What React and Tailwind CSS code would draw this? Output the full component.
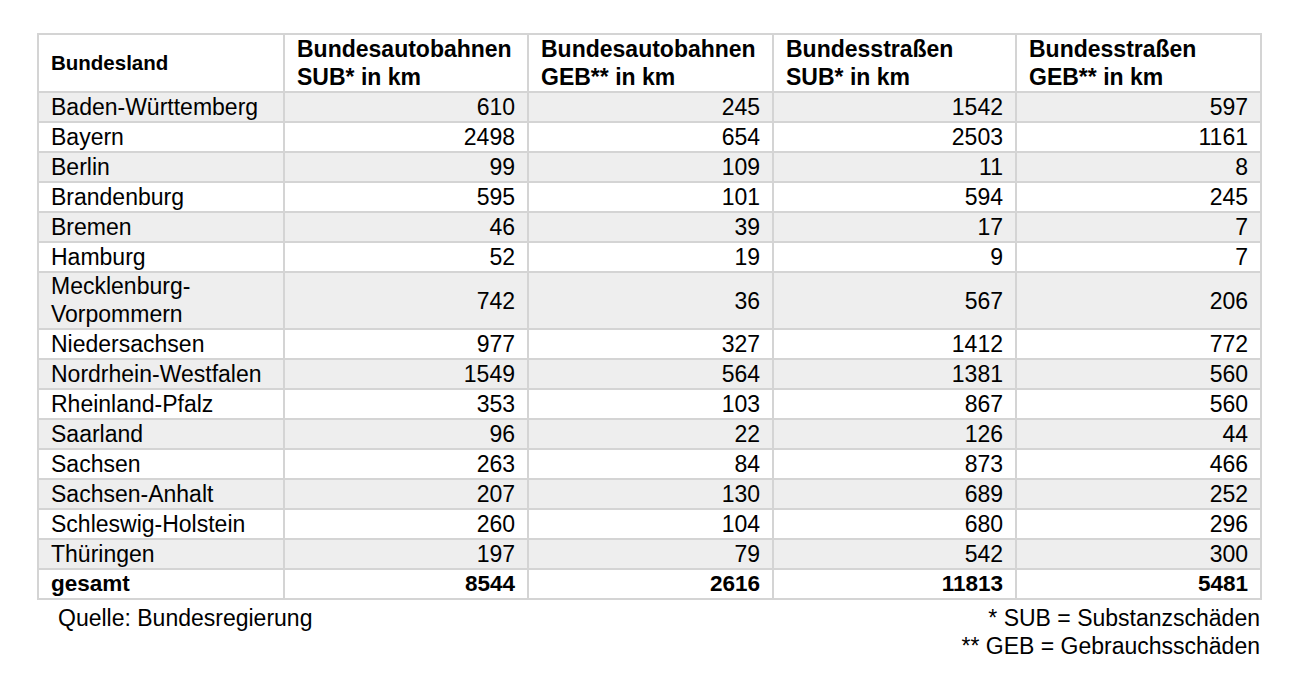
import React from "react";

const rows = [
  ["Baden-Württemberg", 610, 245, 1542, 597],
  ["Bayern", 2498, 654, 2503, 1161],
  ["Berlin", 99, 109, 11, 8],
  ["Brandenburg", 595, 101, 594, 245],
  ["Bremen", 46, 39, 17, 7],
  ["Hamburg", 52, 19, 9, 7],
  ["Mecklenburg-\nVorpommern", 742, 36, 567, 206],
  ["Niedersachsen", 977, 327, 1412, 772],
  ["Nordrhein-Westfalen", 1549, 564, 1381, 560],
  ["Rheinland-Pfalz", 353, 103, 867, 560],
  ["Saarland", 96, 22, 126, 44],
  ["Sachsen", 263, 84, 873, 466],
  ["Sachsen-Anhalt", 207, 130, 689, 252],
  ["Schleswig-Holstein", 260, 104, 680, 296],
  ["Thüringen", 197, 79, 542, 300],
];

const headers = [
  ["Bundesautobahnen", "SUB* in km"],
  ["Bundesautobahnen", "GEB** in km"],
  ["Bundesstraßen", "SUB* in km"],
  ["Bundesstraßen", "GEB** in km"],
];

export default function App() {
  return (
    <div
      className="w-[1300px] h-[680px] bg-white text-black pt-[33px] pl-[37px]"
      style={{ fontFamily: '"Liberation Sans", Arial, sans-serif' }}
    >
      <table className="table-fixed border-collapse w-[1223px]">
        <colgroup>
          <col className="w-[246px]" />
          <col className="w-[244px]" />
          <col className="w-[245px]" />
          <col className="w-[243px]" />
          <col className="w-[245px]" />
        </colgroup>
        <thead>
          <tr>
            <th className="border-2 border-[#d4d4d4] text-left align-middle px-[12px] py-0 text-[20.5px] font-bold leading-[24px]">
              Bundesland
            </th>
            {headers.map((h, i) => (
              <th
                key={i}
                className="border-2 border-[#d4d4d4] text-left align-middle px-[12px] py-0 text-[23px] font-bold leading-[28px]"
              >
                {h[0]}
                <br />
                {h[1]}
              </th>
            ))}
          </tr>
        </thead>
        <tbody>
          {rows.map((r, i) => (
            <tr
              key={r[0]}
              className={i % 2 === 0 ? "bg-[#eeeeee]" : "bg-white"}
            >
              <td
                className={
                  "border-2 border-[#d4d4d4] px-[12px] py-0 text-[23px] align-middle whitespace-pre-line " +
                  (i === 6 ? "leading-[27.5px]" : "leading-[28px]")
                }
              >
                {r[0]}
              </td>
              {r.slice(1).map((v, j) => (
                <td
                  key={j}
                  className="border-2 border-[#d4d4d4] px-[12px] py-0 text-[23px] leading-[28px] text-right align-middle"
                >
                  {v}
                </td>
              ))}
            </tr>
          ))}
          <tr className="bg-white">
            <td className="border-2 border-[#d4d4d4] px-[12px] py-0 text-[22.5px] leading-[28px] font-bold">
              gesamt
            </td>
            {[8544, 2616, 11813, 5481].map((v) => (
              <td
                key={v}
                className="border-2 border-[#d4d4d4] px-[12px] py-0 text-[22.5px] leading-[28px] font-bold text-right"
              >
                {v}
              </td>
            ))}
          </tr>
        </tbody>
      </table>
      <div className="flex justify-between w-[1223px] text-[23px] leading-[28px] pt-[4px]">
        <div className="pl-[21px]">Quelle: Bundesregierung</div>
        <div className="text-right">
          <div>* SUB = Substanzschäden</div>
          <div>** GEB = Gebrauchsschäden</div>
        </div>
      </div>
    </div>
  );
}
